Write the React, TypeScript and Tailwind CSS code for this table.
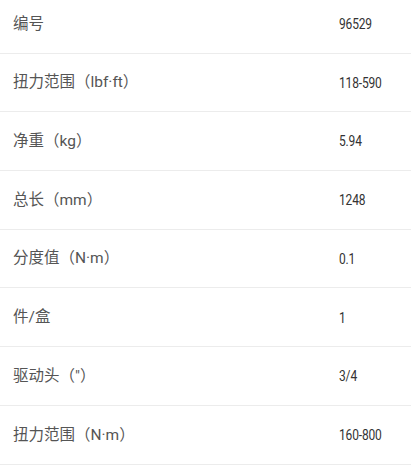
import React from 'react';

const rows: [string, string][] = [
  ['编号', '96529'],
  ['扭力范围（lbf·ft）', '118-590'],
  ['净重（kg）', '5.94'],
  ['总长（mm）', '1248'],
  ['分度值（N·m）', '0.1'],
  ['件/盒', '1'],
  ['驱动头（"）', '3/4'],
  ['扭力范围（N·m）', '160-800'],
];

const App: React.FC = () => {
  return (
    <div className="w-[411px] h-[470px] bg-white overflow-hidden font-['Roboto','Noto_Sans_CJK_SC',sans-serif]">
      <div className="-mt-[5px]">
        {rows.map(([label, value]) => (
          <div key={label} className="flex items-center h-[58.7px] border-b border-[#ececec] pt-[1px]">
            <div className="pl-[13px] flex-1 text-[15.5px] text-[#555]">{label}</div>
            <div className="w-[72px] text-[15px] text-[#333]">
              <span className="inline-block origin-left scale-x-[0.8] tracking-[-0.2px]">{value}</span>
            </div>
          </div>
        ))}
      </div>
    </div>
  );
};

export default App;
